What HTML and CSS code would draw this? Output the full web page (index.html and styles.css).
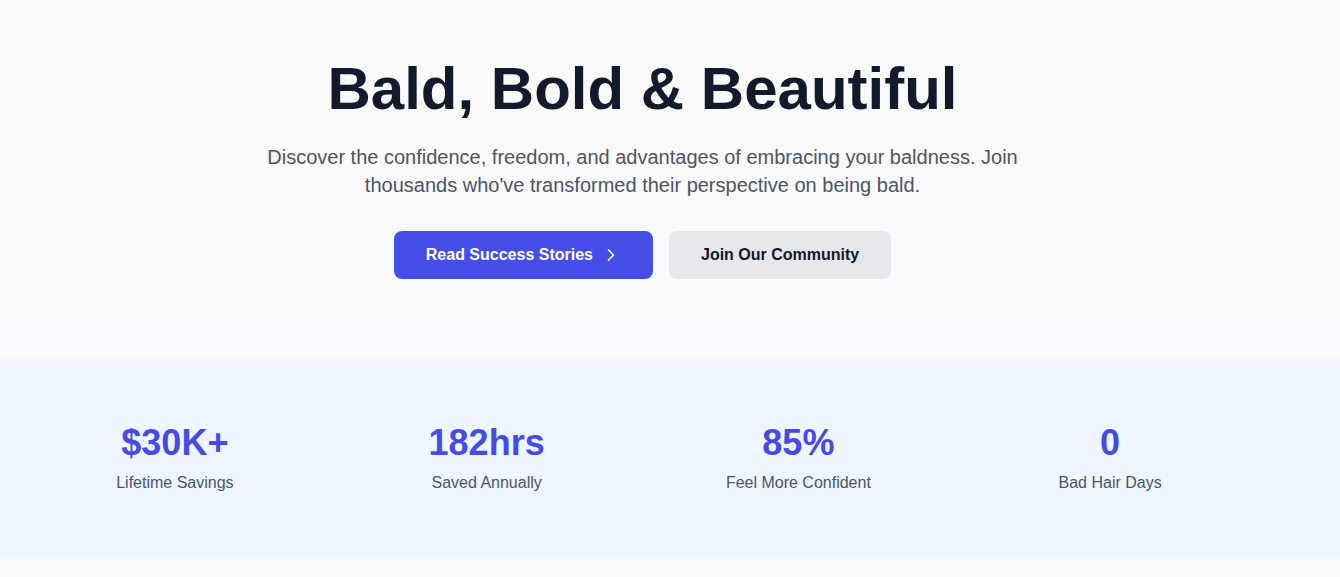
FILE: index.html
```html
<!DOCTYPE html>
<html lang="en">
<head>
<meta charset="utf-8">
<title>Bald, Bold &amp; Beautiful</title>
<link rel="stylesheet" href="styles.css">
</head>
<body>
  <section class="hero">
    <div class="wrap">
      <h1 class="hero-title">Bald, Bold &amp; Beautiful</h1>
      <p class="hero-text">Discover the confidence, freedom, and advantages of embracing your baldness. Join thousands who've transformed their perspective on being bald.</p>
      <div class="hero-actions">
        <a class="btn btn-primary" href="#">Read Success Stories
          <svg class="btn-icon" viewBox="0 0 24 24" width="20" height="20" fill="none" stroke="currentColor" stroke-width="2" stroke-linecap="round" stroke-linejoin="round"><path d="m9 18 6-6-6-6"/></svg>
        </a>
        <a class="btn btn-secondary" href="#">Join Our Community</a>
      </div>
    </div>
  </section>
  <section class="stats">
    <div class="wrap">
      <div class="stats-grid">
        <div class="stat"><div class="stat-value">$30K+</div><div class="stat-label">Lifetime Savings</div></div>
        <div class="stat"><div class="stat-value">182hrs</div><div class="stat-label">Saved Annually</div></div>
        <div class="stat"><div class="stat-value">85%</div><div class="stat-label">Feel More Confident</div></div>
        <div class="stat"><div class="stat-value">0</div><div class="stat-label">Bad Hair Days</div></div>
      </div>
    </div>
  </section>
  <section class="after"></section>
</body>
</html>
```

FILE: styles.css
```css
* { box-sizing: border-box; }
html, body { margin: 0; padding: 0; }
body {
  background: #fafafa;
  font-family: "Liberation Sans", Arial, sans-serif;
  color: #111827;
}
.wrap {
  width: 1285px;
}
.hero {
  background: linear-gradient(to bottom, #fafafa 0%, #f8f9fc 100%);
  padding: 59px 0 80px;
}
.hero .wrap {
  display: flex;
  flex-direction: column;
  align-items: center;
  text-align: center;
}
.hero-title {
  margin: 0 0 24px;
  font-size: 60px;
  line-height: 60px;
  font-weight: 700;
  color: #141a2c;
}
.hero-text {
  margin: 0 0 32px;
  max-width: 768px;
  font-size: 20px;
  line-height: 28px;
  color: #4b5563;
}
.hero-actions {
  display: flex;
  gap: 16px;
}
.btn {
  display: inline-flex;
  align-items: center;
  height: 48px;
  padding: 0 32px;
  border-radius: 8px;
  font-family: "Liberation Sans", Arial, sans-serif;
  font-size: 16px;
  font-weight: 700;
  line-height: 24px;
  text-decoration: none;
}
.btn-primary {
  background: #464de8;
  color: #ffffff;
}
.btn-icon {
  margin-left: 8px;
  flex: none;
}
.btn-secondary {
  background: #e5e7eb;
  color: #111827;
}
.stats {
  background: #eff5ff;
  padding: 64px 0;
}
.stats-grid {
  display: grid;
  grid-template-columns: repeat(4, 1fr);
  padding: 0 19px;
}
.stat {
  text-align: center;
}
.stat-value {
  font-size: 36px;
  line-height: 40px;
  font-weight: 700;
  color: #464be6;
}
.stat-label {
  margin-top: 8px;
  font-size: 16px;
  line-height: 24px;
  color: #4b5563;
}
.after {
  height: 18px;
  background: #fafafa;
}
```
